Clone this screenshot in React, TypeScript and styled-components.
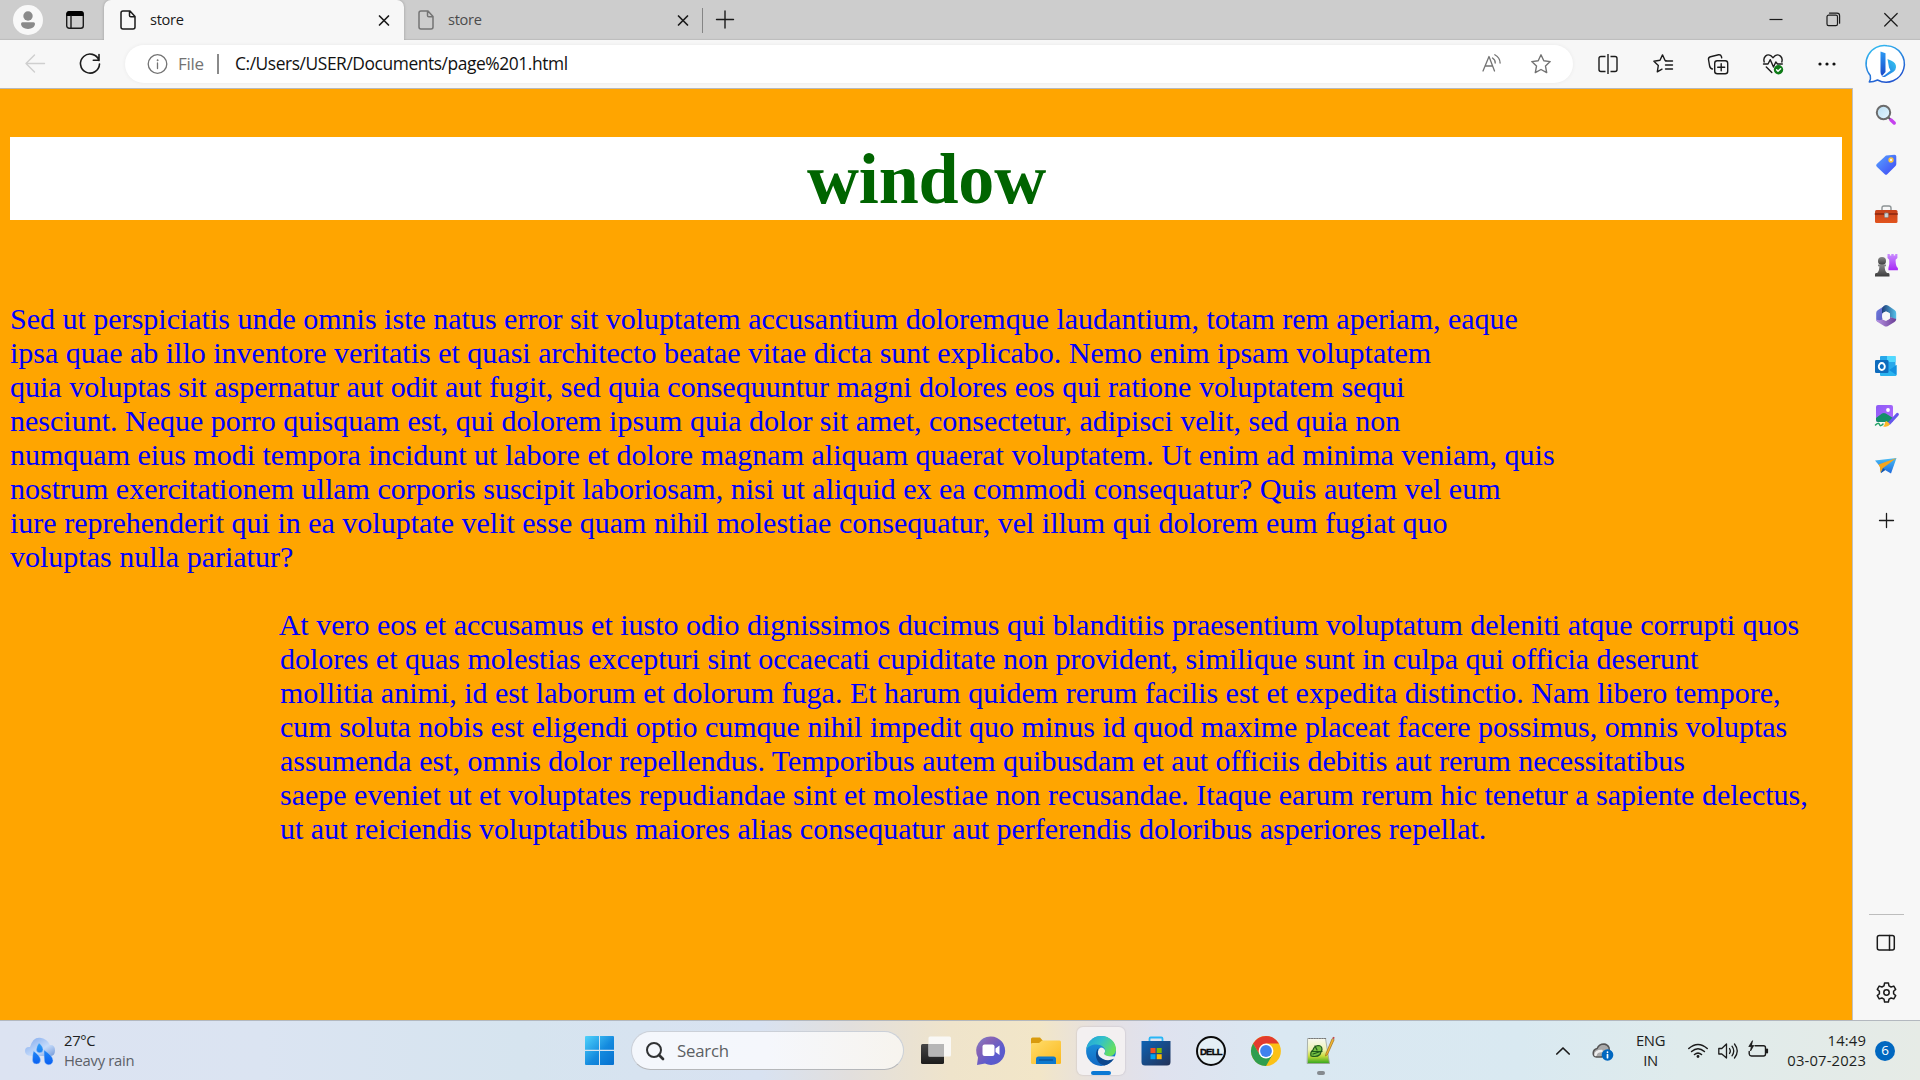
import React from "react";
import styled, { createGlobalStyle } from "styled-components";

const Global = createGlobalStyle`
  * { box-sizing: border-box; }
  html, body { margin: 0; padding: 0; overflow: hidden; }
  svg { display: block; flex: none; overflow: visible; }
`;

const ui = `"Segoe UI", "Open Sans", "Noto Sans", sans-serif`;

const Screen = styled.div`
  width: 1920px;
  height: 1080px;
  display: flex;
  flex-direction: column;
  background: #f7f7f7;
  font-family: ${ui};
`;

/* ---------- tab strip ---------- */
const TabStrip = styled.header`
  display: flex;
  height: 40px;
  background: #cdcdcd;
  box-shadow: inset 0 -2px 1px -1px #bdbdbd;
`;
const StripStart = styled.div`
  width: 104px;
  display: flex;
  align-items: center;
  padding-left: 13px;
  gap: 22px;
`;
const Avatar = styled.div`
  width: 30px;
  height: 30px;
  border-radius: 50%;
  background: #f8f8f8;
`;
const Tab = styled.div<{ $active?: boolean; $width: number }>`
  width: ${(p) => p.$width}px;
  display: flex;
  align-items: center;
  padding: 0 ${(p) => (p.$active ? 14 : 11)}px 0 ${(p) => (p.$active ? 16 : 14)}px;
  border-radius: 7px 7px 0 0;
  background: ${(p) => (p.$active ? "#f7f7f7" : "transparent")};
  color: ${(p) => (p.$active ? "#1a1a1a" : "#4b4b4b")};
  box-shadow: ${(p) => (p.$active ? "0 0 3px rgba(0,0,0,.25)" : "none")};
  clip-path: inset(-4px -4px 0 -4px);
`;
const TabTitle = styled.span`
  flex: 1;
  margin-left: 14px;
  padding-bottom: 2px;
  font-size: 14.6px;
  line-height: 20px;
  letter-spacing: -0.3px;
`;
const StripDivider = styled.div`
  width: 1px;
  height: 25px;
  margin: 8px 13px 0 2px;
  background: #858585;
`;
const NewTab = styled.div`
  display: flex;
  align-items: center;
`;
const WindowControls = styled.div`
  margin-left: auto;
  display: flex;
`;
const ControlButton = styled.div`
  width: 57.5px;
  display: flex;
  align-items: center;
  justify-content: center;
`;

/* ---------- toolbar ---------- */
const Toolbar = styled.nav`
  display: flex;
  align-items: center;
  height: 48px;
  background: #f7f7f7;
`;
const NavButtons = styled.div`
  width: 125px;
  display: flex;
  gap: 34px;
  padding-left: 25px;
`;
const AddressBar = styled.div`
  width: 1448px;
  height: 38px;
  border-radius: 19px;
  background: #fff;
  box-shadow: 0 0 4px rgba(0, 0, 0, 0.06);
  display: flex;
  align-items: center;
  padding: 0 22px;
`;
const Scheme = styled.span`
  margin-left: 11px;
  padding-bottom: 2px;
  width: 39px;
  font-size: 17px;
  letter-spacing: -0.3px;
  color: #737373;
`;
const BarDivider = styled.div`
  width: 2px;
  height: 20px;
  background: #8a8a8a;
`;
const Url = styled.span`
  flex: 1;
  margin-left: 16px;
  padding-bottom: 2px;
  font-size: 17.4px;
  letter-spacing: -0.43px;
  color: #111;
`;
const AddressActions = styled.div`
  display: flex;
  gap: 29px;
`;
const ToolIcons = styled.div`
  display: flex;
  padding-left: 7px;
`;
const ToolButton = styled.div`
  width: 55px;
  display: flex;
  justify-content: center;
`;
const BingButton = styled.div`
  margin-left: 13px;
`;

/* ---------- page and sidebar ---------- */
const Middle = styled.div`
  display: flex;
  height: 932px;
`;
const Page = styled.main`
  width: 1852px;
  padding: 48px 10px 0;
  border-top: 1px solid #b9b9b9;
  background: #ffa500;
  font-family: "Times New Roman", "Liberation Serif", serif;
  font-size: 30px;
  line-height: 34px;
  color: #0000ff;
`;
const Heading = styled.h1`
  margin: 0;
  height: 83px;
  padding-left: 1px;
  background: #fff;
  color: #006400;
  font-size: 72px;
  line-height: 85px;
  letter-spacing: -0.2px;
  text-align: center;
`;
const Paragraph = styled.p<{ $indent?: number; $top: number }>`
  margin: ${(p) => p.$top}px 0 0 ${(p) => p.$indent || 0}px;
  text-indent: ${(p) => (p.$indent ? -1.3 : 0)}px;
  white-space: nowrap;
`;
const Sidebar = styled.aside`
  width: 68px;
  display: flex;
  flex-direction: column;
  align-items: center;
  padding: 2px 1px 0 0;
  border-left: 1px solid #c0c0c0;
  background: #f7f7f7;
`;
const SideSlot = styled.div<{ $height?: number }>`
  height: ${(p) => p.$height || 50.2}px;
  display: flex;
  align-items: center;
`;
const SideFooter = styled.div`
  margin-top: auto;
  display: flex;
  flex-direction: column;
  align-items: center;
  padding-bottom: 3px;
`;
const SideRule = styled.div`
  width: 35px;
  height: 1px;
  margin-bottom: 3px;
  background: #bdbdbd;
`;

/* ---------- taskbar ---------- */
const Taskbar = styled.footer`
  display: flex;
  align-items: center;
  height: 60px;
  border-top: 1px solid #b3b8bf;
  background: linear-gradient(
    90deg,
    #dce3f2 0,
    #dbe4f2 260px,
    #d6e4ef 520px,
    #d8e2f1 760px,
    #e2dfdd 850px,
    #efe4cb 950px,
    #f2e6c8 1040px,
    #e5e0e2 1100px,
    #dfe2ef 1160px,
    #dae8f2 1280px,
    #d9e9f1 1520px,
    #dfebec 1680px,
    #e6ebe6 1920px
  );
`;
const Weather = styled.div`
  width: 585px;
  display: flex;
  align-items: center;
  padding-left: 25px;
  gap: 9px;
`;
const TwoLines = styled.div<{ $align?: string; $width?: number; $track?: number }>`
  width: ${(p) => (p.$width ? p.$width + "px" : "auto")};
  padding-bottom: 2px;
  text-align: ${(p) => p.$align || "left"};
  font-size: 14.8px;
  line-height: 20px;
  letter-spacing: ${(p) => p.$track ?? -0.3}px;
  white-space: nowrap;
  color: #1d1f21;
`;
const Dim = styled.div`
  color: #5d6168;
`;
const SearchBox = styled.div`
  width: 273px;
  height: 39px;
  margin: 0 4px 0 17px;
  padding-left: 14px;
  display: flex;
  align-items: center;
  gap: 13px;
  border-radius: 20px;
  border: 1px solid #cbd0d8;
  border-bottom-color: #b5b7ba;
  background: linear-gradient(90deg, #f4f7fc, #f5f7fc 50%, #f7f4ee);
  font-size: 16.8px;
  letter-spacing: -0.2px;
  color: #5c5f63;
`;
const Apps = styled.div`
  display: flex;
`;
const AppSlot = styled.div<{ $active?: boolean }>`
  position: relative;
  width: 48px;
  height: 48px;
  margin: 0 3.5px;
  display: flex;
  align-items: center;
  justify-content: center;
  border-radius: 6px;
  background: ${(p) => (p.$active ? "#f3f0f1" : "transparent")};
  box-shadow: ${(p) => (p.$active ? "0 0 1px 1px rgba(180,170,180,.25)" : "none")};
`;
const Indicator = styled.div<{ $width: number; $color: string }>`
  position: absolute;
  bottom: 0;
  left: 50%;
  width: ${(p) => p.$width}px;
  height: 4px;
  margin-left: ${(p) => -p.$width / 2}px;
  border-radius: 2px;
  background: ${(p) => p.$color};
`;
const DellText = styled.text`
  font: 700 9.5px "Liberation Sans", Arial, sans-serif;
  fill: #0a0a0a;
  stroke: #0a0a0a;
  stroke-width: 0.4px;
`;
const Tray = styled.div`
  margin-left: auto;
  padding-right: 25px;
  display: flex;
  align-items: center;
`;
const CloudStatus = styled.div`
  margin-left: 23px;
`;
const TrayGroup = styled.div`
  display: flex;
  gap: 10px;
`;
const CountBadge = styled.div`
  width: 20px;
  height: 20px;
  margin-left: 9px;
  border-radius: 50%;
  background: #0067c0;
  color: #fff;
  font-size: 13.5px;
  font-weight: 500;
  line-height: 19px;
  text-align: center;
`;

type IconProps = { w?: number; h?: number; vw?: number; vh?: number; c?: string; sw?: number; children: React.ReactNode };
const Ico = ({ w = 20, h = w, vw = w, vh = h, c = "#1b1b1b", sw = 1.4, children }: IconProps) => (
  <svg width={w} height={h} viewBox={`0 0 ${vw} ${vh}`} fill="none" stroke={c} strokeWidth={sw} strokeLinecap="round" strokeLinejoin="round">
    {children}
  </svg>
);

const DocIcon = ({ c }: { c: string }) => (
  <Ico w={16} h={20} c={c} sw={1.5}>
    <path d="M3 1h7l5 5.5V17a2 2 0 0 1-2 2H3a2 2 0 0 1-2-2V3a2 2 0 0 1 2-2zM9.5 1v4.5q0 1.300 1.300 1.300H15" />
  </Ico>
);
const CloseIcon = () => (
  <Ico w={12} h={12} sw={1.7}><path d="M1.500 2l9 9M10.500 2l-9 9" /></Ico>
);

const FIRST = [
  "Sed ut perspiciatis unde omnis iste natus error sit voluptatem accusantium doloremque laudantium, totam rem aperiam, eaque",
  "ipsa quae ab illo inventore veritatis et quasi architecto beatae vitae dicta sunt explicabo. Nemo enim ipsam voluptatem",
  "quia voluptas sit aspernatur aut odit aut fugit, sed quia consequuntur magni dolores eos qui ratione voluptatem sequi",
  "nesciunt. Neque porro quisquam est, qui dolorem ipsum quia dolor sit amet, consectetur, adipisci velit, sed quia non",
  "numquam eius modi tempora incidunt ut labore et dolore magnam aliquam quaerat voluptatem. Ut enim ad minima veniam, quis",
  "nostrum exercitationem ullam corporis suscipit laboriosam, nisi ut aliquid ex ea commodi consequatur? Quis autem vel eum",
  "iure reprehenderit qui in ea voluptate velit esse quam nihil molestiae consequatur, vel illum qui dolorem eum fugiat quo",
  "voluptas nulla pariatur?",
];
const SECOND = [
  "At vero eos et accusamus et iusto odio dignissimos ducimus qui blanditiis praesentium voluptatum deleniti atque corrupti quos",
  "dolores et quas molestias excepturi sint occaecati cupiditate non provident, similique sunt in culpa qui officia deserunt",
  "mollitia animi, id est laborum et dolorum fuga. Et harum quidem rerum facilis est et expedita distinctio. Nam libero tempore,",
  "cum soluta nobis est eligendi optio cumque nihil impedit quo minus id quod maxime placeat facere possimus, omnis voluptas",
  "assumenda est, omnis dolor repellendus. Temporibus autem quibusdam et aut officiis debitis aut rerum necessitatibus",
  "saepe eveniet ut et voluptates repudiandae sint et molestiae non recusandae. Itaque earum rerum hic tenetur a sapiente delectus,",
  "ut aut reiciendis voluptatibus maiores alias consequatur aut perferendis doloribus asperiores repellat.",
];
const Lines = ({ text }: { text: string[] }) => (
  <>{text.map((t) => <React.Fragment key={t}>{t}<br /></React.Fragment>)}</>
);

const DefsSvg = styled.svg`
  position: absolute;
`;
const Defs = () => (
  <DefsSvg width="0" height="0">
    <defs>
      <linearGradient id="bingRing" x1="0" y1="0" x2="0.5" y2="1"><stop offset="0" stopColor="#35c6f4" /><stop offset="1" stopColor="#2156cf" /></linearGradient>
      <linearGradient id="bingB" x1="0" y1="0" x2="0" y2="1"><stop offset="0" stopColor="#2b9af4" /><stop offset="1" stopColor="#1b48c8" /></linearGradient>
      <linearGradient id="bingC" x1="0" y1="1" x2="1" y2="0"><stop offset="0" stopColor="#1e6ce0" /><stop offset="1" stopColor="#36c8f0" /></linearGradient>
      <linearGradient id="tag" x1="0" y1="0" x2="1" y2="1"><stop offset="0" stopColor="#58a5ff" /><stop offset="1" stopColor="#3f45f4" /></linearGradient>
      <linearGradient id="box" x1="0" y1="0" x2="0" y2="1"><stop offset="0" stopColor="#c6421b" /><stop offset="1" stopColor="#e2541e" /></linearGradient>
      <linearGradient id="pawn" x1="0" y1="0" x2="0" y2="1"><stop offset="0" stopColor="#8a8a8a" /><stop offset="1" stopColor="#3c3c3c" /></linearGradient>
      <linearGradient id="rook" x1="0" y1="0" x2="0" y2="1"><stop offset="0" stopColor="#c88cff" /><stop offset="1" stopColor="#a728f5" /></linearGradient>
      <linearGradient id="lens" x1="0" y1="0" x2="1" y2="1"><stop offset="0" stopColor="#b9def2" /><stop offset="1" stopColor="#e6f6ff" /></linearGradient>
      <linearGradient id="m1" x1="0" y1="0" x2="1" y2="1"><stop offset="0" stopColor="#6f7fe0" /><stop offset="1" stopColor="#5a55bb" /></linearGradient>
      <linearGradient id="m2" x1="0" y1="0" x2="1" y2="0"><stop offset="0" stopColor="#1e3e78" /><stop offset="1" stopColor="#57c1ea" /></linearGradient>
      <linearGradient id="m3" x1="0" y1="0" x2="1" y2="0"><stop offset="0" stopColor="#b895e4" /><stop offset="1" stopColor="#6a3d95" /></linearGradient>
      <linearGradient id="purple" x1="0" y1="0" x2="1" y2="1"><stop offset="0" stopColor="#8c5af5" /><stop offset="1" stopColor="#b46bff" /></linearGradient>
      <linearGradient id="plane" x1="0" y1="0" x2="0" y2="1"><stop offset="0" stopColor="#49bdf5" /><stop offset="1" stopColor="#1f69dc" /></linearGradient>
      <linearGradient id="cloud" x1="0" y1="0" x2="1" y2="1"><stop offset="0" stopColor="#7ba6ec" /><stop offset=".6" stopColor="#c6dbfa" /><stop offset="1" stopColor="#7299d8" /></linearGradient>
      <linearGradient id="drop" x1="0" y1="0" x2="0" y2="1"><stop offset="0" stopColor="#2c9cf6" /><stop offset="1" stopColor="#0a5ff2" /></linearGradient>
      <linearGradient id="win" gradientUnits="userSpaceOnUse" x1="0" y1="0" x2="29" y2="29"><stop offset="0" stopColor="#4fd2fb" /><stop offset=".55" stopColor="#148ade" /><stop offset="1" stopColor="#0670cf" /></linearGradient>
      <linearGradient id="tvDark" x1="0" y1="0" x2="0" y2="1"><stop offset="0" stopColor="#454545" /><stop offset="1" stopColor="#1c1c1c" /></linearGradient>
      <linearGradient id="chat" x1="0" y1="0" x2="1" y2="1"><stop offset="0" stopColor="#7a86cf" /><stop offset=".3" stopColor="#8662b4" /><stop offset=".65" stopColor="#5b5bce" /><stop offset="1" stopColor="#5a5ac6" /></linearGradient>
      <linearGradient id="folder" x1="0" y1="0" x2="1" y2="1"><stop offset="0" stopColor="#ffdd6c" /><stop offset="1" stopColor="#fbb91e" /></linearGradient>
      <linearGradient id="edgeTop" x1="0" y1="0" x2="1" y2=".5"><stop offset="0" stopColor="#1f9fdc" /><stop offset=".5" stopColor="#33c1c9" /><stop offset="1" stopColor="#66e05e" /></linearGradient>
      <linearGradient id="edgeLeft" x1="0" y1="0" x2="0" y2="1"><stop offset="0" stopColor="#1c9be0" /><stop offset="1" stopColor="#1269c4" /></linearGradient>
      <linearGradient id="store" x1="0" y1="0" x2="1" y2="1"><stop offset="0" stopColor="#0c63b4" /><stop offset="1" stopColor="#243258" /></linearGradient>
      <linearGradient id="npp" x1="0" y1="0" x2="0" y2="1"><stop offset="0" stopColor="#f7f8f2" /><stop offset=".45" stopColor="#eef3b4" /><stop offset=".7" stopColor="#c8dc3c" /><stop offset="1" stopColor="#2fa51c" /></linearGradient>
    </defs>
  </DefsSvg>
);

export default function App() {
  return (
    <Screen>
      <Global />
      <Defs />
      <TabStrip>
        <StripStart>
          <Avatar>
            <Ico w={30} c="none"><circle cx="15" cy="11" r="4.700" fill="#8a8a8a" /><path d="M9.500 17.300h11q1.500 0 1.500 1.500c0 3-3 5.200-7 5.200s-7-2.200-7-5.200q0-1.500 1.500-1.500z" fill="#8a8a8a" /></Ico>
          </Avatar>
          <Ico w={20}><rect x="1.700" y="1.700" width="16.600" height="16.600" rx="2.500" /><path d="M1.500 6V4q0-3 3-3h11q3 0 3 3v2z" fill="#000" stroke="none" /><path d="M6 6v12" /></Ico>
        </StripStart>
        <Tab $active $width={300}><DocIcon c="#1b1b1b" /><TabTitle>store</TabTitle><CloseIcon /></Tab>
        <Tab $width={296}><DocIcon c="#747474" /><TabTitle>store</TabTitle><CloseIcon /></Tab>
        <StripDivider />
        <NewTab><Ico w={18}><path d="M.5 8.500h17M9 0v17" /></Ico></NewTab>
        <WindowControls>
          <ControlButton><Ico w={14} sw={1.200}><path d="M.5 6.500h13" strokeLinecap="butt" /></Ico></ControlButton>
          <ControlButton><Ico w={14} sw={1.200}><rect x="0" y="2.200" width="10.500" height="10.500" rx="1.600" /><path d="M2.500.1h7.500q2.600 0 2.600 2.600v7.500" /></Ico></ControlButton>
          <ControlButton><Ico w={14} sw={1.200}><path d="M.7.5l12.500 12.500M13.200.5L.7 13" /></Ico></ControlButton>
        </WindowControls>
      </TabStrip>

      <Toolbar>
        <NavButtons>
          <Ico w={20} c="#cfcfcf"><path d="M19.500 10.500H1M9.500 2L1 10.500 9.500 19" /></Ico>
          <Ico w={22} sw={1.600}><path d="M20 7.500A9.500 9.500 0 1 0 20.500 11M20 1.500V7.300H14.300" /></Ico>
        </NavButtons>
        <AddressBar>
          <Ico w={20} c="#737373" sw={1.300}><circle cx="10.500" cy="10" r="9.300" /><path d="M10.500 9v5.500" /><circle cx="10.500" cy="6.200" r=".6" fill="#737373" stroke="#737373" strokeWidth=".6" /></Ico>
          <Scheme>File</Scheme>
          <BarDivider />
          <Url>C:/Users/USER/Documents/page%201.html</Url>
          <AddressActions>
            <Ico w={20} c="#737373" sw={1.300}><path d="M1 17L7 2.500 12.500 17M3 12h7.500M10.500 4q3 2 2.700 5M12.800.7q5.300 3 5.300 8.300" /></Ico>
            <Ico w={20} c="#737373"><path d="M10 .8l2.800 5.900 6.400.9-4.700 4.500 1.200 6.500L10 15.500l-5.700 3.100 1.200-6.500L.8 7.600l6.400-.9z" /></Ico>
          </AddressActions>
        </AddressBar>
        <ToolIcons>
          <ToolButton><Ico w={20}><path d="M7.500 2.500H3q-2 0-2 2v11q0 2 2 2h4.500M12.500 2.500H17q2 0 2 2v11q0 2-2 2h-4.500M10 0v20" strokeLinecap="butt" /></Ico></ToolButton>
          <ToolButton><Ico w={20}><path d="M13.300 6.700l-1.200-.2L9.500.9 7 6.300l-6.100.9 4.400 4.300-1 6.300 4.700-2.600M12.500 7h7M12.500 11h7M12.500 15h7" /></Ico></ToolButton>
          <ToolButton><Ico w={20}><rect x="6.700" y="6.700" width="13" height="13" rx="2.500" /><path d="M13.200 9.700v7M9.700 13.200h7M4.500 15C2.500 14.800 2 13.500 1.600 12L.5 5.500q-.3-2.300 2-2.800L10.600.8q2.200-.3 2.800 1.700l.3 1.300" /></Ico></ToolButton>
          <ToolButton><Ico w={20}><path d="M1.200 8C-.3 3 4-.5 7.700 1.600L10 3.700l2.300-2.100C16-.5 20.300 3 18.800 8M.5 10h4.500l2.300-4.300L10.500 13l2.300-5 1.700 2h4.800M3.300 13l5.500 5.500" /><circle cx="15.500" cy="15.800" r="4.700" fill="#0f7b18" stroke="none" /><path d="M13.600 15.800l1.400 1.500 2.600-2.600" stroke="#fff" /></Ico></ToolButton>
          <ToolButton><Ico w={20} c="none"><circle cx="2" cy="10" r="1.600" fill="#111" /><circle cx="9" cy="10" r="1.600" fill="#111" /><circle cx="16" cy="10" r="1.600" fill="#111" /></Ico></ToolButton>
        </ToolIcons>
        <BingButton>
          <Ico w={38} c="none">
            <path d="M19 .8A18.200 18.200 0 1 1 9.500 35q-4 2-8.200 2 1.800-3 1-6.500A18.200 18.200 0 0 1 19 .8z" fill="#fff" stroke="url(#bingRing)" strokeWidth="1.500" />
            <path d="M12.500 6.500l5 1.800V27l-3.500 4q-1.500-1.500-1.500-4z" fill="url(#bingB)" />
            <path d="M19.500 14l4 1.700q4.800 2 4.500 6.500-.2 3-2.500 4.500l-8.200 5q-2 .8-3.500-.7 1.500.5 3.700-1.500l5-4-1.500-3z" fill="url(#bingC)" />
          </Ico>
        </BingButton>
      </Toolbar>

      <Middle>
        <Page>
          <Heading>window</Heading>
          <Paragraph $top={82}><Lines text={FIRST} /></Paragraph>
          <Paragraph $top={34} $indent={270}><Lines text={SECOND} /></Paragraph>
        </Page>
        <Sidebar>
          <SideSlot><Ico w={22} c="none"><path d="M14 14l2 2" stroke="#555" strokeWidth="2" /><circle cx="8.500" cy="8.500" r="6.700" fill="url(#lens)" stroke="#6b6b6b" strokeWidth="2" /><path d="M16 16l3.200 3" stroke="#c541ee" strokeWidth="3.500" /></Ico></SideSlot>
          <SideSlot><Ico w={22} c="none"><path d="M11 1.500l8.500-.7q1.800 0 1.800 1.800v7.500q0 1-.8 1.800l-8.300 8.300q-1.200 1.200-2.400 0l-8-7.500q-1.400-1.300 0-2.600z" fill="url(#tag)" /><circle cx="16" cy="6" r="1.900" stroke="#ffc83d" strokeWidth="1.500" fill="#f4f1ff" /></Ico></SideSlot>
          <SideSlot><Ico w={22} c="none"><path d="M7 6V4q0-2 2-2h5q2 0 2 2v2" stroke="#8c9294" strokeWidth="1.400" /><rect x="0" y="6" width="22.500" height="13" rx="1.500" fill="url(#box)" /><path d="M.3 10h22" stroke="#8b2711" /><rect x="9.500" y="9" width="3.800" height="4.500" rx=".8" fill="#cfd3d5" stroke="#80868a" strokeWidth=".6" /></Ico></SideSlot>
          <SideSlot $height={50}><Ico w={22} c="none"><circle cx="7" cy="6" r="4" fill="url(#pawn)" /><path d="M3 9.500h8v1.800H9.700Q9.500 16 12 18h1.500q1 0 1 1.500v2H0v-2Q0 18 1 18h1.200Q4.500 16 4.300 11.300H3z" fill="url(#pawn)" /><path d="M12.500-1h2.300v1.500h1.500V-1h2.400v1.500h1.500V-1h2.200v4l-1.800 1.800q0 5.500 1.300 7.200l1 1v2.300h-9.500V13q1.400-3 .8-8.200L12.500 3z" fill="url(#rook)" /></Ico></SideSlot>
          <SideSlot $height={50}><Ico w={22} c="none"><path d="M11 0L3 5Q1.200 6 1.200 8v6.500Q1.200 16 3 17l4.500-2.600V7.500z" fill="url(#m1)" /><path d="M9.500.5q1.500-1 3.500 0L19.500 5q1.700 1 1.700 3v6.500L15 12V8.500L11 6.300 7 8.500V4q0-2 2.500-3.500z" fill="url(#m2)" /><path d="M21.200 14q0 2-1.700 3L13 21q-2 1-3.800 0L3 17.200q-1.700-1-1.800-2.700 3 1.500 6.300 0L11 16l4-2.500V12z" fill="url(#m3)" /><circle cx="11" cy="11" r="4" fill="#f7f7f7" /></Ico></SideSlot>
          <SideSlot $height={50}><Ico w={22} c="none"><rect x="5" y="1" width="15.500" height="14" rx="1" fill="#28a8ea" /><path d="M12 1h8.500v6H12z" fill="#50d9ff" /><path d="M5 11l8 4 8.500-5v10q0 1-1 1H6q-1 0-1-1z" fill="#2bb4ef" /><path d="M14 15l7.500-5v10z" fill="#1490df" /><rect x="0" y="5" width="13.500" height="13" rx="1.300" fill="#0f6cbd" /><ellipse cx="6.800" cy="11.500" rx="3" ry="3.500" stroke="#fff" strokeWidth="1.900" /></Ico></SideSlot>
          <SideSlot $height={50}><Ico w={22} c="none"><rect x="1" y="0" width="17" height="17" rx="2" fill="url(#purple)" /><path d="M1 13l6-4.500q2-1.200 3.800 0L18 13v2q0 2-2 2H3q-2 0-2-2z" fill="#14906a" /><circle cx="13" cy="5" r="1.900" fill="#fff" /><path d="M0 18.500h10v4H0z" fill="#f7f7f7" /><path d="M.5 20q3-3 4-.5t3.500-.5" stroke="#21a366" strokeWidth="1.500" /><path d="M22.300 9.500L14.500 18" stroke="#6557ec" strokeWidth="3.200" /><path d="M11.500 16l3.500 3q-2 4-7 2.300 2-1 1.800-3 .2-1.700 1.700-2.300z" fill="#fcb928" /></Ico></SideSlot>
          <SideSlot $height={50}><Ico w={22} c="none"><path d="M0 5.500L21.500 3 16 18.500 10 15l-4 3-1-6.500z" fill="url(#plane)" /><path d="M21.500 3L3.500 9.500 5 12.500 5.500 18l2.500-5z" fill="#f5a51d" /><path d="M8 13l2.200 2L6 18z" fill="#1854a6" /></Ico></SideSlot>
          <SideSlot $height={60}><Ico w={15} sw={1.300}><path d="M.5 7.500h14M7.500.5v14" /></Ico></SideSlot>
          <SideFooter>
            <SideRule />
            <SideSlot $height={49}><Ico w={20} sw={1.500}><rect x="1.300" y="2.500" width="17" height="14.500" rx="2" /><path d="M13.500 2.500v14.500" /></Ico></SideSlot>
            <SideSlot $height={50}><Ico w={21} sw={1.500}><path d="M8.600 1h3.800l.6 2.800 2.100 1.200 2.700-.9 1.900 3.300-2.100 1.900v2.400l2.100 1.900-1.900 3.300-2.700-.9-2.100 1.200-.6 2.800H8.600L8 17.200 5.900 16l-2.700.9-1.900-3.300 2.100-1.900V9.300L1.300 7.400l1.900-3.300 2.700.9L8 3.800z" /><circle cx="10.500" cy="10.500" r="2.700" /></Ico></SideSlot>
          </SideFooter>
        </Sidebar>
      </Middle>

      <Taskbar>
        <Weather>
          <Ico w={30} h={28} c="none"><path d="M5 10Q8 0 15 .8T25 8q5-.5 5 5.500T24 19H6q-6-.5-6-5t5-4z" fill="url(#cloud)" /><path d="M14 6q4 3.500 4 6.500a3.300 3.300 0 0 1-6.600 0q0-3 2.600-6.500zM8.500 14q7 5 7 9a4 4 0 0 1-8 0q0-5 1-9zM19 13q9 6 9 10.500a4.300 4.300 0 0 1-8.600 0Q19 20 19 13z" fill="url(#drop)" stroke="#a7cdfa" strokeWidth=".4" /></Ico>
          <TwoLines>27°C<Dim>Heavy rain</Dim></TwoLines>
        </Weather>
        <Ico w={29} c="none"><path d="M1 0h13v13.800H0V1q0-1 1-1zM15 0h13q1 0 1 1v12.800H15zM0 15h14v14H1q-1 0-1-1zM15 15h14v13q0 1-1 1H15z" fill="url(#win)" /></Ico>
        <SearchBox><Ico w={18} c="#303234" sw={2}><circle cx="8" cy="8" r="7" /><path d="M13 13l4 4" strokeWidth="2.700" /></Ico>Search</SearchBox>
        <Apps>
          <AppSlot><Ico w={30} c="none"><rect x="0" y="8" width="23" height="20" rx="1.500" fill="url(#tvDark)" /><rect x="7.500" y=".5" width="22.500" height="20" rx="1.500" fill="#fafafa" fillOpacity=".9" /><rect x="7.500" y="8" width="15.500" height="12.500" fill="#b6b6b6" /></Ico></AppSlot>
          <AppSlot><Ico w={30} c="none"><path d="M15 .5a14.200 14.200 0 1 1-6 27.100L1 29l1-7.500A14.200 14.200 0 0 1 15 .5z" fill="url(#chat)" /><rect x="6.500" y="8.500" width="12" height="11.500" rx="2" fill="#fff" /><path d="M19.500 12.500l4-3v9.500l-4-3z" fill="#fff" /></Ico></AppSlot>
          <AppSlot><Ico w={30} c="none"><path d="M0 3q0-1.500 1.500-1.500H9L12 5v4H0z" fill="#d99b0d" /><path d="M0 8q0-1 1.500-1H8l3-2.500h17.500Q30 4.500 30 6v21q0 1-1.500 1h-27Q0 28 0 27z" fill="url(#folder)" /><path d="M5 28v-5q0-2.500 2.500-2.500h15Q25 20.500 25 23v5z" fill="#0d79cd" /><path d="M8.500 24h13" stroke="#0b559c" strokeWidth="1.300" /></Ico></AppSlot>
          <AppSlot $active>
            <Ico w={30} c="none">
              <circle cx="15" cy="15" r="14.900" fill="url(#edgeLeft)" />
              <path d="M.2 13.500C1.200 6 7.500.1 15 .1 24 .1 30 6.500 30 13.300c0 4.200-3 7-6.700 7-3 0-5.100-1.100-5.100-2.300 0-.9 1-1.400 1-3.300 0-3.200-3.700-6.300-8.800-6.300-4.600 0-8.500 2-10.200 5.100z" fill="url(#edgeTop)" />
              <path d="M12.300 12.200C8.500 15.500 8.700 27.500 18.500 29.500c4-1 7-3.300 9.200-6.500.4-.6-.2-1-.8-.7-6 2.800-15.200.6-15.200-6.300z" fill="#0d478e" />
              <path d="M29.900 20.500l-2 2.300q-5.900 2.700-10.900.2-5.500-2.500-5-7.500.4-3 2.800-4 3.700.2 4.300 3.300c0 1.800-1.100 2.300-.9 3.300.4 1.400 3.400 2.300 5.800 2.100z" fill="#f3f0f1" />
            </Ico>
            <Indicator $width={20} $color="#0a78d4" />
          </AppSlot>
          <AppSlot><Ico w={30} c="none"><path d="M8.500 6V2.700q0-1.200 1.200-1.200h10.600q1.200 0 1.200 1.200V6" stroke="#28b6f6" strokeWidth="1.800" /><path d="M.5 5h29v21q0 3.500-3.500 3.500H4Q.5 29.500.5 26z" fill="url(#store)" /><path d="M9.500 12h5v5h-5z" fill="#f25022" /><path d="M15.700 12h5v5h-5z" fill="#7fba00" /><path d="M9.500 18.200h5v5h-5z" fill="#00a4ef" /><path d="M15.700 18.200h5v5h-5z" fill="#ffb900" /></Ico></AppSlot>
          <AppSlot><Ico w={30} c="none"><circle cx="15" cy="15" r="14" stroke="#0a0a0a" strokeWidth="2" fill="#e4eff5" /><DellText x="4" y="18.500" textLength="22.500" lengthAdjust="spacing">DELL</DellText></Ico></AppSlot>
          <AppSlot><Ico w={30} c="none"><circle cx="15" cy="15" r="14.900" fill="#fbc116" /><path d="M15 15L8.500 18.700 2.100 7.500A14.900 14.900 0 0 1 27.900 7.500H15z" fill="#e33b2e" /><path d="M2.100 7.500A14.900 14.900 0 0 0 15 29.900L21.500 18.700H15l-6.500-.1z" fill="#2f9e4f" /><circle cx="15" cy="15" r="7.400" fill="#fff" /><circle cx="15" cy="15" r="5.900" fill="#3f82ef" /></Ico></AppSlot>
          <AppSlot>
            <Ico w={30} c="none"><path d="M2 2.500h17.500l4 25H1.500z" fill="url(#npp)" stroke="#9da39b" strokeWidth=".8" /><path d="M3 2.500h17" stroke="#777" strokeWidth="1.200" strokeDasharray="1 1.600" /><path d="M5 20q-1-4 2-6 1-4 5-4.500 4 0 4 4l-2 5q-3 3-9 1.500zM6 15.500h10M9 10l2 4M7 18l9-3" fill="#75c043" stroke="#1f5a1c" strokeWidth="1.200" /><path d="M26 3l-6 14.500-.5 2.500 2-1.500L28 4z" fill="#f5b82f" stroke="#9b6b1c" strokeWidth=".7" /><path d="M26.300 2.300l.8-1.500 1.600.7-.7 1.700z" fill="#c54848" /></Ico>
            <Indicator $width={8} $color="#858a8f" />
          </AppSlot>
        </Apps>
        <Tray>
          <Ico w={14} sw={1.700}><path d="M.8 10L7 4l6.200 6" /></Ico>
          <CloudStatus>
            <Ico w={20} c="none"><path d="M3.500 16Q0 15.500.2 12t4-4.500Q6 3 11 3q3.500.3 5 3.500l.5 6-8 3.500z" fill="#aaa" stroke="#555" strokeWidth="1.500" /><path d="M2.500 14q.5-4 6-4" stroke="#eee" strokeWidth="2.500" /><circle cx="14.500" cy="14" r="5.800" fill="#0067c0" /><path d="M14.500 13.500v3.200M14.500 11v.2" stroke="#fff" strokeWidth="1.700" /></Ico>
          </CloudStatus>
          <TwoLines $align="center" $width={75}>ENG<br />IN</TwoLines>
          <TrayGroup>
            <Ico w={20} sw={1.600}><path d="M.8 7.500q9.200-8 18.400 0M3.600 10.500q6.400-5.500 12.800 0M6.500 13.500q3.500-2.800 7 0" /><circle cx="10" cy="15.500" r="1.400" fill="#1b1b1b" stroke="none" /></Ico>
            <Ico w={20} sw={1.300}><path d="M.8 7.500h3L8.500 3v14L3.800 13h-3zM11.500 7.500q1.700 2.500 0 5M14 5.200q3.500 4.800 0 9.600M16.500 3q5.500 7 0 14" /></Ico>
            <Ico w={20} sw={1.400}><path d="M7 4.700h8.500q2 0 2 2V13q0 2-2 2H3.500q-2 0-2.300-2v-2.500" /><path d="M19 8.500v3" strokeWidth="2.200" /><path d="M4.300 0L.8 5.500h2.500L2.500 10l3.300-5.500H3.800z" fill="#1b1b1b" strokeWidth=".8" /></Ico>
          </TrayGroup>
          <TwoLines $align="right" $width={98} $track={0.15}>14:49<br />03-07-2023</TwoLines>
          <CountBadge>6</CountBadge>
        </Tray>
      </Taskbar>
    </Screen>
  );
}
